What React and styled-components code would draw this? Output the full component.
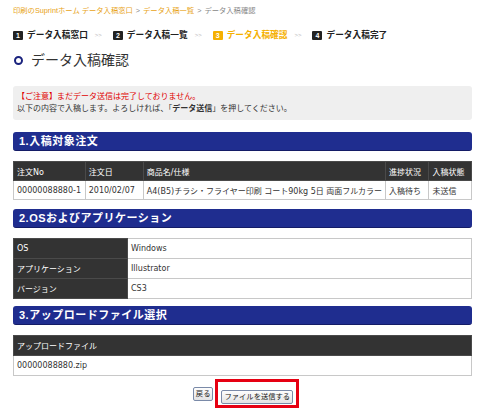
import React from 'react';
import styled, { createGlobalStyle } from 'styled-components';

const GlobalStyle = createGlobalStyle`
  body {
    margin: 0;
    background: #fff;
    font-family: "DejaVu Sans", "Noto Sans CJK JP", sans-serif;
    color: #333;
  }
`;

const Page = styled.div`
  width: 459px;
  padding: 6px 0 0 13px;
`;

const Crumbs = styled.div`
  font-family: "Liberation Sans", "Noto Sans CJK JP", sans-serif;
  font-size: 7.3px;
  line-height: 9px;
  color: #888;
  a {
    color: #e8a317;
    text-decoration: none;
  }
  span.sep {
    margin: 0 3px;
    color: #888;
  }
`;

const Steps = styled.div`
  display: flex;
  align-items: center;
  margin-top: 14px;
  font-family: "Liberation Sans", "Noto Sans CJK JP", sans-serif;
  font-size: 8.7px;
  font-weight: bold;
  line-height: 12px;
`;

const Step = styled.div`
  display: flex;
  align-items: center;
  gap: 4px;
  color: ${(p) => (p.$active ? '#f5b000' : '#222')};
`;

const StepNo = styled.span`
  display: inline-flex;
  align-items: center;
  justify-content: center;
  width: 10px;
  height: 9px;
  border-radius: 1px;
  background: ${(p) => (p.$active ? '#f5b000' : '#222')};
  color: #fff;
  font-size: 7px;
  line-height: 9px;
`;

const Arrow = styled.span`
  color: #bbb;
  font-size: 6px;
  font-weight: normal;
  margin: 0 11px 0 7px;
`;

const Title = styled.h1`
  display: flex;
  align-items: center;
  gap: 8px;
  margin: 10px 0 0 0;
  font-family: "Liberation Sans", "Noto Sans CJK JP", sans-serif;
  font-size: 14px;
  font-weight: normal;
  line-height: 18px;
  color: #333;
`;

const Ring = styled.span`
  width: 5px;
  height: 5px;
  border: 2px solid #1a237e;
  border-radius: 50%;
  margin-left: 1px;
`;

const Notice = styled.div`
  margin-top: 17px;
  background: #efefef;
  border-radius: 3px;
  padding: 5px 4px 5px;
  font-size: 8px;
  line-height: 12px;
  color: #333;
  p {
    margin: 0;
  }
  .warn {
    color: #e00000;
  }
`;

const SectionHead = styled.h2`
  margin: ${(p) => p.$top}px 0 0 0;
  height: 18px;
  border-radius: 3px;
  background: #1f2d8f;
  border-bottom: 1px solid #141c66;
  color: #fff;
  font-family: "Liberation Sans", "Noto Sans CJK JP", sans-serif;
  font-size: 11px;
  font-weight: bold;
  line-height: 18px;
  padding-left: 6px;
  letter-spacing: 0.5px;
`;

const Table = styled.table`
  width: 100%;
  margin-top: 10px;
  border-collapse: collapse;
  font-size: 8px;
  th,
  td {
    height: ${(p) => p.$row}px;
    padding: 0 3px;
    text-align: left;
    white-space: nowrap;
    border: 1px solid #c8c8c8;
  }
  th {
    background: #333;
    color: #fff;
    font-weight: normal;
    border-color: #4a4a4a;
  }
  td {
    color: #333;
    background: #fff;
  }
`;

const Buttons = styled.div`
  display: flex;
  justify-content: center;
  align-items: center;
  gap: 2px;
  margin-top: 3px;
  padding-left: 7px;
`;

const Btn = styled.button`
  font-family: "Liberation Sans", "Noto Sans CJK JP", sans-serif;
  font-size: 7.3px;
  line-height: 10px;
  padding: 1px 2px;
  background: linear-gradient(#fdfdfd, #e3e3e3);
  border: 1px solid #7a8aa8;
  border-radius: 2px;
  color: #222;
`;

const Highlight = styled.div`
  border: 3px solid #e60012;
  padding: 2px 3px 1px;
`;

export default function App() {
  return (
    <>
      <GlobalStyle />
      <Page>
        <Crumbs>
          <a href="#">印刷のSuprintホーム</a>
          <a href="#"> データ入稿窓口</a>
          <span className="sep">&gt;</span>
          <a href="#">データ入稿一覧</a>
          <span className="sep">&gt;</span>
          データ入稿確認
        </Crumbs>
        <Steps>
          <Step><StepNo>1</StepNo>データ入稿窓口</Step>
          <Arrow>&gt;&gt;</Arrow>
          <Step><StepNo>2</StepNo>データ入稿一覧</Step>
          <Arrow>&gt;&gt;</Arrow>
          <Step $active><StepNo $active>3</StepNo>データ入稿確認</Step>
          <Arrow>&gt;&gt;</Arrow>
          <Step><StepNo>4</StepNo>データ入稿完了</Step>
        </Steps>
        <Title><Ring />データ入稿確認</Title>
        <Notice>
          <p className="warn">【ご注意】まだデータ送信は完了しておりません。</p>
          <p>以下の内容で入稿します。よろしければ、「<b>データ送信</b>」を押してください。</p>
        </Notice>

        <SectionHead $top={12}>1.入稿対象注文</SectionHead>
        <Table $row={18}>
          <thead>
            <tr>
              <th style={{ width: 65 }}>注文No</th>
              <th style={{ width: 53 }}>注文日</th>
              <th>商品名/仕様</th>
              <th style={{ width: 38 }}>進捗状況</th>
              <th style={{ width: 37 }}>入稿状態</th>
            </tr>
          </thead>
          <tbody>
            <tr>
              <td>00000088880-1</td>
              <td>2010/02/07</td>
              <td>A4(B5)チラシ・フライヤー印刷 コート90kg 5日 両面フルカラー</td>
              <td>入稿待ち</td>
              <td>未送信</td>
            </tr>
          </tbody>
        </Table>

        <SectionHead $top={9}>2.OSおよびアプリケーション</SectionHead>
        <Table $row={19}>
          <tbody>
            <tr><th style={{ width: 107 }}>OS</th><td>Windows</td></tr>
            <tr><th>アプリケーション</th><td>Illustrator</td></tr>
            <tr><th>バージョン</th><td>CS3</td></tr>
          </tbody>
        </Table>

        <SectionHead $top={7}>3.アップロードファイル選択</SectionHead>
        <Table $row={19}>
          <thead>
            <tr><th>アップロードファイル</th></tr>
          </thead>
          <tbody>
            <tr><td>00000088880.zip</td></tr>
          </tbody>
        </Table>

        <Buttons>
          <Btn>戻る</Btn>
          <Highlight>
            <Btn>ファイルを送信する</Btn>
          </Highlight>
        </Buttons>
      </Page>
    </>
  );
}
